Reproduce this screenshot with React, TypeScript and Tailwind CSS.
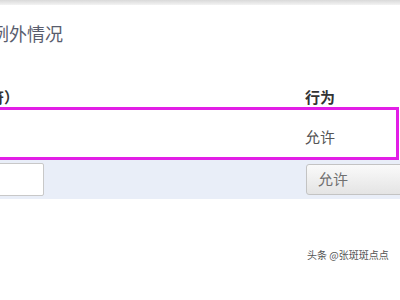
export default function App() {
  return (
    <div
      className="w-[400px] h-[300px] bg-white overflow-hidden flex flex-col"
      style={{ fontFamily: '"Noto Sans CJK SC", "Noto Sans", sans-serif' }}
    >
      <div className="h-[5px] shrink-0 bg-gradient-to-b from-[#d9d9d9] to-[#f3f3f3]" />
      <div className="ml-[-9px] mt-[17px] h-[22px] text-[18px] leading-[22px] text-[#595d6e] whitespace-nowrap">
        例外情况
      </div>
      <div className="mt-[43px] flex items-end h-[20px] text-[15px] leading-[20px] font-semibold text-[#333]">
        <div className="ml-[-11px] w-[316px] shrink-0 whitespace-nowrap">符）</div>
        <div>行为</div>
      </div>
      <div className="ml-[-4px] w-[403px] h-[53px] shrink-0 border-[3px] border-[#e21ee6] bg-white flex items-center pt-[8px]">
        <div className="ml-[306px] text-[15px] text-[#555]">允许</div>
      </div>
      <div className="h-[39px] shrink-0 bg-[#e9eef8] flex items-center">
        <div className="ml-[-3px] w-[47px] h-[33px] shrink-0 bg-white border border-[#c8c8c8] rounded-[2px]" />
        <div className="ml-[262px] w-[110px] h-[31px] shrink-0 rounded-[3px] border border-[#c3c3c3] bg-gradient-to-b from-[#fafafa] to-[#e4e4e4] flex items-center pl-[11px] text-[15px] text-[#707070]">
          允许
        </div>
      </div>
      <div className="mt-[48px] ml-[307px] text-[10px] leading-[16px] text-[#555] whitespace-nowrap">
        头条 @张斑斑点点
      </div>
    </div>
  );
}
